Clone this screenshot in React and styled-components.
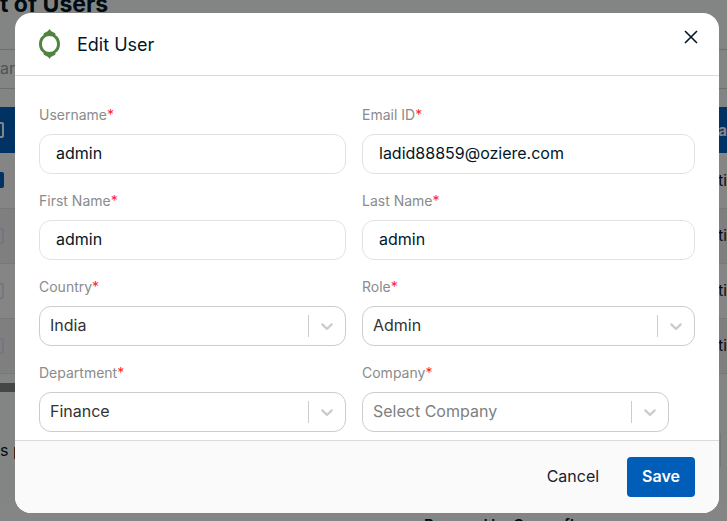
import React from "react";
import styled, { createGlobalStyle, css } from "styled-components";

const GlobalStyle = createGlobalStyle`
  *, *::before, *::after { box-sizing: border-box; }
  body { margin: 0; overflow: hidden; font-family: Inter, "Open Sans", sans-serif; font-size: 16px; color: #011627; }
  button, input, select { font: inherit; color: inherit; }
`;

const Page = styled.div`
  height: 100vh;
  overflow: hidden;
  display: flex;
  flex-direction: column;
  background: #fafffd;
`;
const PageTitle = styled.h1`
  margin: 0;
  line-height: 8px;
  font-size: 23px;
  font-weight: 700;
`;
const SearchBar = styled.div`
  height: 40px;
  margin: 41px 0 18px;
  display: flex;
  align-items: center;
  border: solid #d0d4d8;
  border-width: 1px 0;
  color: #9a9ea3;
  line-height: 36px;
  padding-bottom: 2px;
`;
const Users = styled.table`
  width: 100%;
  border-collapse: collapse;
  font-size: 15px;
  flex: none;
`;
const HeadRow = styled.tr`
  height: 46px;
  background: #0061c0;
  color: #fff;
`;
const UserRow = styled.tr`
  height: 55px;
  background: ${(p) => (p.$alt ? "#f4f4f4" : "#fff")};
  border-bottom: 1px solid #e4e6ee;
`;
const Cell = styled.td`
  padding: 0;
  width: ${(p) => (p.$end ? "7px" : "auto")};
  white-space: nowrap;
  font-weight: ${(p) => (p.$bold ? 700 : 400)};
`;
const Tick = styled.input`
  appearance: none;
  display: block;
  width: 16px;
  height: 16px;
  margin: 0 0 0 -12px;
  border: 2px solid ${(p) => (p.$light ? "#fff" : "#dfe6f2")};
  border-radius: 2px;
  &:checked { background: #0061c0; border-color: #0061c0; }
`;
const ScrollThumb = styled.div`
  flex: none;
  width: 50%;
  height: 9px;
  margin-top: 9px;
  background: #868686;
`;
const Pager = styled.div`
  flex: none;
  height: 34px;
  margin: 41px 6px 36px 0;
  display: flex;
  align-items: center;
  border: solid #e2e5e8;
  border-width: 0 1px 0 0;
`;
const PageFooter = styled.footer`
  flex: 1 0 18px;
  padding: 12px 0 0 424px;
  background: #fff;
  font-size: 15px;
  font-weight: 600;
  line-height: 20px;
  white-space: nowrap;
`;

const Overlay = styled.div`
  position: fixed;
  inset: 0;
  display: flex;
  padding: 13px 8px 8px 15px;
  background: rgba(0, 0, 0, 0.48);
`;
const Dialog = styled.form`
  flex: 1;
  display: flex;
  flex-direction: column;
  overflow: hidden;
  border-radius: 16px;
  background: #fff;
`;
const DialogHeader = styled.header`
  height: 63px;
  flex: none;
  display: flex;
  align-items: center;
  gap: 16px;
  padding: 0 20px 0 23px;
  border-bottom: 1px solid #dadada;
`;
const DialogTitle = styled.h2`
  flex: 1;
  margin: 0;
  font-size: 18px;
  font-weight: 400;
`;
const CloseButton = styled.button`
  display: flex;
  padding: 0;
  margin-bottom: 14px;
  border: 0;
  background: none;
`;
const Body = styled.div`
  flex: 1;
  min-height: 0;
  overflow: hidden;
  display: grid;
  grid-template-columns: 307fr 333fr;
  grid-auto-rows: 70px;
  gap: 16px;
  padding: 28px 24px 0;
`;
const Field = styled.div`
  min-width: 0;
  padding-right: ${(p) => (p.$inset ? "26px" : 0)};
`;
const Label = styled.label`
  display: block;
  height: 30px;
  line-height: 22px;
  font-size: 14px;
  color: #8b8b8b;
`;
const Star = styled.span`
  color: #ff1f2d;
`;
const control = css`
  width: 100%;
  height: 40px;
  border-radius: 12px;
  background: #fff;
`;
const TextBox = styled.input`
  ${control}
  padding: 0 16px 2px;
  border: 1px solid #e1e2e8;
  outline: none;
`;
const SelectBox = styled.div`
  ${control}
  display: grid;
  grid-template-columns: 1fr 37px;
  align-items: center;
  border: 1px solid #ccc;
`;
const Select = styled.select`
  grid-area: 1 / 1 / 2 / 3;
  width: 100%;
  height: 38px;
  padding: 0 40px 2px 10px;
  appearance: none;
  border: 0;
  outline: none;
  background: none;
  color: ${(p) => (p.$empty ? "#808080" : "#333")};
`;
const Indicator = styled.span`
  grid-area: 1 / 2;
  height: 22px;
  display: flex;
  align-items: center;
  justify-content: center;
  border-left: 1px solid #ccc;
  color: #ccc;
  pointer-events: none;
`;
const DialogFooter = styled.footer`
  flex: none;
  height: 73px;
  display: flex;
  align-items: center;
  justify-content: flex-end;
  gap: 13px;
  padding: 0 24px;
  border-top: 1px solid #dadada;
  background: #fafafa;
`;
const Action = styled.button`
  height: 40px;
  padding: 0 15px 2px;
  border: 0;
  border-radius: 4px;
  background: ${(p) => (p.$primary ? "#005eb8" : "none")};
  color: ${(p) => (p.$primary ? "#fff" : "#1b1c2e")};
  font-weight: ${(p) => (p.$primary ? 600 : 400)};
`;

const fields = [
  { id: "username", label: "Username", value: "admin" },
  { id: "email", label: "Email ID", value: "ladid88859@oziere.com" },
  { id: "first", label: "First Name", value: "admin" },
  { id: "last", label: "Last Name", value: "admin" },
  { id: "country", label: "Country", value: "India", select: true },
  { id: "role", label: "Role", value: "Admin", select: true },
  { id: "department", label: "Department", value: "Finance", select: true },
  { id: "company", label: "Company", value: "Select Company", select: true, empty: true, inset: true },
];

const Logo = () => (
  <svg width="23" height="30" viewBox="0 0 23 30" aria-hidden="true">
    <path fill="#528340" fillRule="evenodd" d="M11.500 0C12.500 2 14.500 3 17.200 4.200L17.600 6.200C20.500 8 22 11 22 15s-1.500 7-4.400 8.800L17.200 25.800C14.500 27 12.500 28 11.500 30 10.500 28 8.500 27 5.800 25.800L5.400 23.800C2.500 22 1 19 1 15s1.500-7 4.400-8.800L5.800 4.200C8.500 3 10.500 2 11.500 0ZM11.500 7C7.300 7 4 10.300 4 15s3.300 8 7.500 8 7.500-3.300 7.500-8-3.300-8-7.500-8Z" />
  </svg>
);
const Cross = () => (
  <svg width="16" height="16" viewBox="0 0 16 16" fill="none" stroke="#011627" strokeWidth="1.6" aria-hidden="true">
    <path d="m2 2 12 12M14 2 2 14" />
  </svg>
);
const Chevron = () => (
  <svg width="20" height="20" viewBox="0 0 20 20" fill="currentColor" aria-hidden="true">
    <path d="M4.516 7.548c0.436-0.446 1.043-0.481 1.576 0l3.908 3.747 3.908-3.747c0.533-0.481 1.141-0.446 1.574 0 0.436 0.445 0.408 1.197 0 1.615-0.406 0.418-4.695 4.502-4.695 4.502-0.217 0.223-0.502 0.335-0.787 0.335s-0.570-0.112-0.789-0.335c0 0-4.287-4.084-4.695-4.502s-0.436-1.170 0-1.615z" />
  </svg>
);

function FormField({ id, label, value, select, empty, inset }) {
  return (
    <Field $inset={inset}>
      <Label htmlFor={id}>{label}<Star>*</Star></Label>
      {select ? (
        <SelectBox>
          <Select id={id} $empty={empty} defaultValue={value}>
            <option>{value}</option>
          </Select>
          <Indicator><Chevron /></Indicator>
        </SelectBox>
      ) : (
        <TextBox id={id} defaultValue={value} />
      )}
    </Field>
  );
}

export default function App() {
  return (
    <>
      <GlobalStyle />
      <Page inert>
        <PageTitle>t of Users</PageTitle>
        <SearchBar>ar</SearchBar>
        <Users>
          <thead>
            <HeadRow>
              <Cell><Tick type="checkbox" $light aria-label="Select all" /></Cell>
              <Cell $end $bold>a</Cell>
            </HeadRow>
          </thead>
          <tbody>
            {[true, false, false, false].map((checked, i) => (
              <UserRow key={i} $alt={i % 2 === 1}>
                <Cell><Tick type="checkbox" defaultChecked={checked} aria-label="Select user" /></Cell>
                <Cell $end>ti</Cell>
              </UserRow>
            ))}
          </tbody>
        </Users>
        <ScrollThumb />
        <Pager>s p</Pager>
        <PageFooter>Powered by Cosmoflow</PageFooter>
      </Page>
      <Overlay>
        <Dialog role="dialog" aria-modal="true" aria-labelledby="dialog-title" onSubmit={(e) => e.preventDefault()}>
          <DialogHeader>
            <Logo />
            <DialogTitle id="dialog-title">Edit User</DialogTitle>
            <CloseButton type="button" aria-label="Close"><Cross /></CloseButton>
          </DialogHeader>
          <Body>
            {fields.map((f) => <FormField key={f.id} {...f} />)}
          </Body>
          <DialogFooter>
            <Action type="button">Cancel</Action>
            <Action type="submit" $primary>Save</Action>
          </DialogFooter>
        </Dialog>
      </Overlay>
    </>
  );
}
